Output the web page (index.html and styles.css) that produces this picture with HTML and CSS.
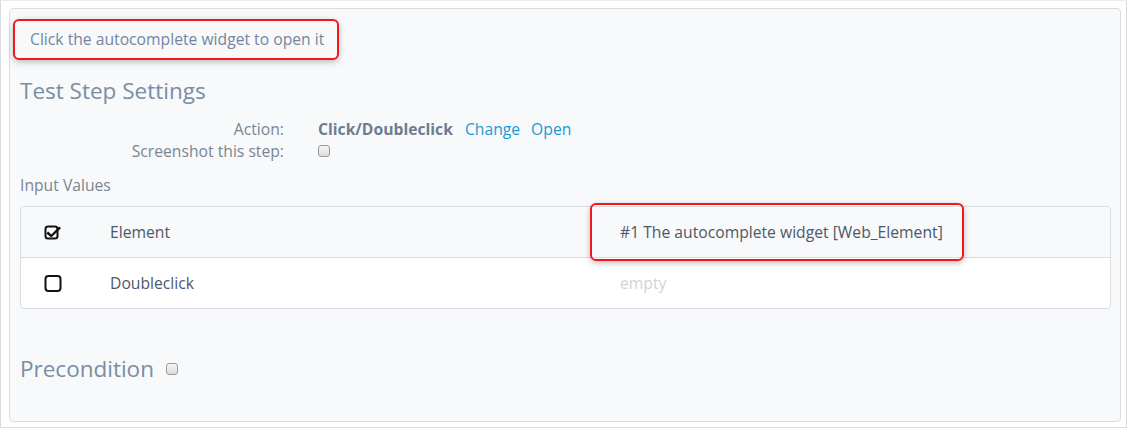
FILE: index.html
```html
<!DOCTYPE html>
<html>
<head>
<meta charset="utf-8">
<link rel="stylesheet" href="styles.css">
</head>
<body>
<div class="frame">
  <div class="panel">
    <div class="note-row">
      <div class="note">Click the autocomplete widget to open it</div>
    </div>
    <h2 class="title">Test Step Settings</h2>
    <div class="settings">
      <div class="label">Action:</div>
      <div class="value"><b class="action">Click/Doubleclick</b><a class="link">Change</a><a class="link">Open</a></div>
      <div class="label">Screenshot this step:</div>
      <div class="value"><span class="cbox"></span></div>
    </div>
    <div class="section-label">Input Values</div>
    <div class="table">
      <div class="row row-alt">
        <div class="cell icon">
          <svg width="18" height="16" viewBox="0 0 18 16"><rect x="1.5" y="2.5" width="12" height="12" rx="2.5" fill="none" stroke="#111" stroke-width="2"/><path d="M4.2 7.6 L7.3 10.6 L15.2 2.4 L17 4.2 L7.3 13.6 L2.4 9.4 Z" fill="#111"/></svg>
        </div>
        <div class="cell name">Element</div>
        <div class="cell val">
          <span class="hl"></span>
          #1 The autocomplete widget [Web_Element]
        </div>
      </div>
      <div class="row">
        <div class="cell icon">
          <svg width="18" height="18" viewBox="0 0 18 18"><rect x="1.5" y="2" width="15" height="15" rx="3" fill="none" stroke="#111" stroke-width="2"/></svg>
        </div>
        <div class="cell name">Doubleclick</div>
        <div class="cell val empty">empty</div>
      </div>
    </div>
    <div class="precondition">
      <span class="pre-title">Precondition</span><span class="cbox"></span>
    </div>
  </div>
</div>
</body>
</html>
```
FILE: styles.css
```css
* { box-sizing: border-box; }
html, body { margin: 0; padding: 0; background: #fff; }
body {
  font-family: "Open Sans", "Liberation Sans", sans-serif;
  font-size: 15.7px;
  color: #6f7c8a;
}
.frame {
  width: 1127px;
  height: 428px;
  border: 1px solid #dcdcdc;
  border-top-color: #ececec;
  padding: 7px 5px 5px 8px;
}
.panel {
  height: 414px;
  background: #f7f9fb;
  border: 1px solid #d9dde1;
  border-radius: 4px;
  padding: 10px 9px 0 10px;
}
.note-row { display: flex; }
.note {
  margin-left: -7px;
  border: 2px solid #f01818;
  border-radius: 6px;
  padding: 8px 0 8px 15px;
  line-height: 21px;
  color: #7386a0;
  box-shadow: 0 2px 6px rgba(0,0,0,0.25);
  background: #f7f9fb;
  width: 326px;
  height: 41px;
  white-space: nowrap;
}
.title {
  margin: 16px 0 0;
  font-size: 22.5px;
  font-weight: 400;
  line-height: 30px;
  color: #7a8da3;
}
.settings {
  display: grid;
  grid-template-columns: 264px auto;
  column-gap: 34px;
  margin-top: 12px;
  line-height: 22px;
}
.label { text-align: right; color: #7a8592; }
.value { display: flex; align-items: center; }
.action { color: #6c7d90; font-weight: 700; margin-right: 12px; }
.link { color: #1a9ad6; margin-right: 11px; }
.cbox {
  display: inline-block;
  width: 12px;
  height: 12px;
  border: 1px solid #9a9a9a;
  border-radius: 3px;
  background: linear-gradient(#f6f6f6, #dcdcdc);
}
.section-label {
  margin-top: 12px;
  line-height: 22px;
  color: #7a8592;
}
.table {
  margin-top: 10px;
  border: 1px solid #d9dde1;
  border-radius: 4px;
  background: #fff;
}
.row {
  display: grid;
  grid-template-columns: 89px 480px 1fr;
  height: 50px;
  align-items: stretch;
}
.row-alt {
  background: #f7f9fb;
  border-bottom: 1px solid #d9dde1;
  height: 51px;
  border-radius: 4px 4px 0 0;
}
.cell { color: #4c5868; display: flex; align-items: center; }
.icon { padding-left: 23px; }
.val { position: relative; padding-left: 30px; }
.empty { color: #d0d4d8; }
.hl {
  position: absolute;
  left: 0;
  top: -4px;
  width: 374px;
  height: 58px;
  border: 2px solid #f01818;
  border-radius: 6px;
  box-shadow: 0 2px 6px rgba(0,0,0,0.25);
}
.precondition {
  margin-top: 45px;
  display: flex;
  align-items: center;
  line-height: 30px;
}
.pre-title { font-size: 22.5px; color: #7a8da3; margin-right: 12px; }
```
